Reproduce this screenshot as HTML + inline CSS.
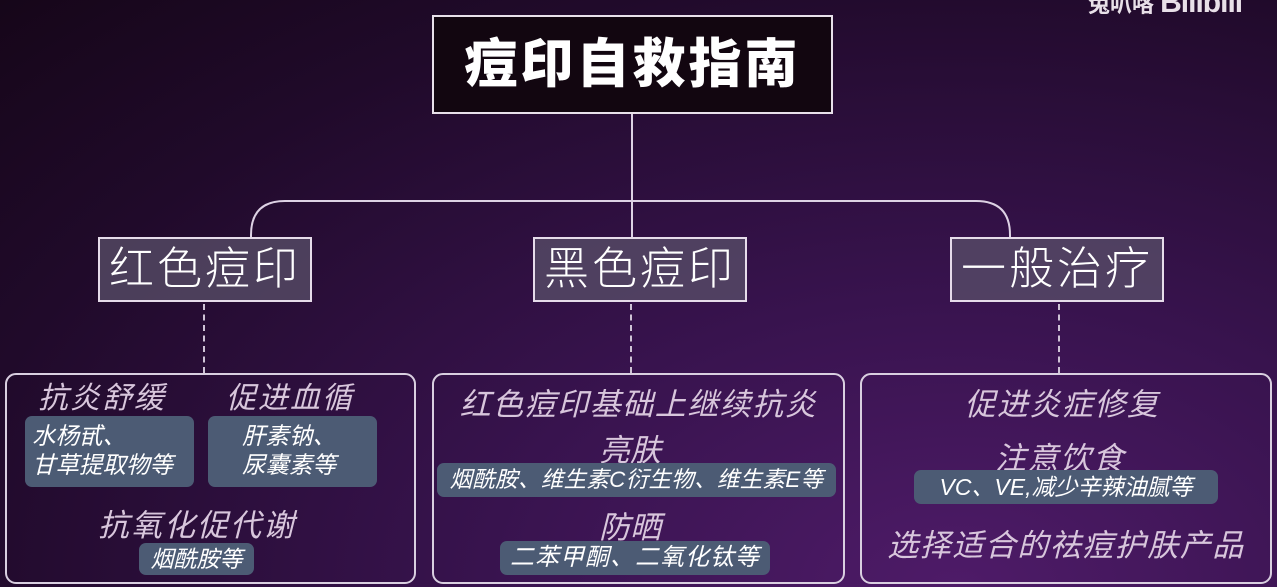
<!DOCTYPE html>
<html><head><meta charset="utf-8">
<style>
*{margin:0;padding:0;box-sizing:border-box}
body{width:1277px;height:587px;overflow:hidden;position:relative;
background:radial-gradient(ellipse at 75% 100%,#4e1b68 0%,#38134e 35%,#200a2a 75%,#160619 100%);
font-family:"Liberation Sans","Noto Sans CJK SC",sans-serif;}
.a{position:absolute}
.title{left:432px;top:15px;width:401px;height:99px;background:#120610;border:2px solid #e8e0ea;color:#fff;font-weight:900;font-size:53px;text-align:center;line-height:95px;letter-spacing:3px}
.cat{top:237px;width:214px;height:65px;background:rgba(90,80,105,0.75);border:2px solid #e6dcea;color:#fff;font-size:45px;line-height:60px;text-align:center;letter-spacing:3px;font-weight:300}
.box{top:373px;height:211px;border:2px solid #d9cfe0;border-radius:11px}
.h{color:#d8c6dc;font-style:italic;text-align:center;white-space:nowrap}
.pill{background:#4c5b74;border-radius:7px;color:#fff;font-style:italic;text-align:center;white-space:nowrap}
.dash{width:0;border-left:2px dashed #cfc3d6}
</style></head><body>
<div class="a" style="left:1088px;top:-14px;color:#e8e0e8;font-size:22px;font-weight:bold">兔叭咯 <span style="font-size:30px;letter-spacing:-1px">Bilibili</span></div>
<div class="a title">痘印自救指南</div>
<div class="a" style="left:631px;top:114px;width:2px;height:123px;background:#ddd2e4"></div>
<svg class="a" style="left:0;top:0" width="1277" height="587">
<path d="M251 237 V235 Q251 201 285 201 H976 Q1010 201 1010 235 V237" fill="none" stroke="#ddd2e4" stroke-width="2"/>
</svg>
<div class="a cat" style="left:98px">红色痘印</div>
<div class="a cat" style="left:533px">黑色痘印</div>
<div class="a cat" style="left:950px">一般治疗</div>
<div class="a dash" style="left:203px;top:304px;height:69px"></div>
<div class="a dash" style="left:630px;top:304px;height:69px"></div>
<div class="a dash" style="left:1058px;top:304px;height:69px"></div>

<div class="a box" style="left:5px;width:411px"></div>
<div class="a box" style="left:432px;width:413px"></div>
<div class="a box" style="left:860px;width:412px"></div>

<div class="a h" style="left:38px;top:373px;font-size:30px;letter-spacing:2px">抗炎舒缓</div>
<div class="a h" style="left:226px;top:373px;font-size:30px;letter-spacing:2px">促进血循</div>
<div class="a pill" style="left:25px;top:416px;width:169px;height:71px;font-size:23.5px;line-height:29px;padding-top:6px;text-align:left;padding-left:7px">水杨甙、<br>甘草提取物等</div>
<div class="a pill" style="left:208px;top:416px;width:169px;height:71px;font-size:23.5px;line-height:29px;padding-top:6px;text-align:left;padding-left:34px">肝素钠、<br>尿囊素等</div>
<div class="a h" style="left:98px;top:500px;font-size:31px;letter-spacing:2px">抗氧化促代谢</div>
<div class="a pill" style="left:139px;top:543px;width:115px;height:32px;font-size:23px;line-height:32px">烟酰胺等</div>

<div class="a h" style="left:432px;top:379px;width:413px;font-size:31px;letter-spacing:1.5px">红色痘印基础上继续抗炎</div>
<div class="a h" style="left:432px;top:425px;width:396px;font-size:31px">亮肤</div>
<div class="a pill" style="left:437px;top:463px;width:399px;height:34px;font-size:22.5px;line-height:34px;letter-spacing:0.3px">烟酰胺、维生素C衍生物、维生素E等</div>
<div class="a h" style="left:432px;top:502px;width:396px;font-size:31px">防晒</div>
<div class="a pill" style="left:500px;top:541px;width:270px;height:34px;font-size:24px;line-height:34px;letter-spacing:1px">二苯甲酮、二氧化钛等</div>

<div class="a h" style="left:860px;top:379px;width:404px;font-size:31px;letter-spacing:1.5px">促进炎症修复</div>
<div class="a h" style="left:860px;top:433px;width:400px;font-size:31px;letter-spacing:1.5px">注意饮食</div>
<div class="a pill" style="left:914px;top:470px;width:304px;height:34px;font-size:23px;line-height:34px">VC、VE,减少辛辣油腻等</div>
<div class="a h" style="left:860px;top:520px;width:412px;font-size:31px;letter-spacing:1.5px">选择适合的祛痘护肤产品</div>
</body></html>
